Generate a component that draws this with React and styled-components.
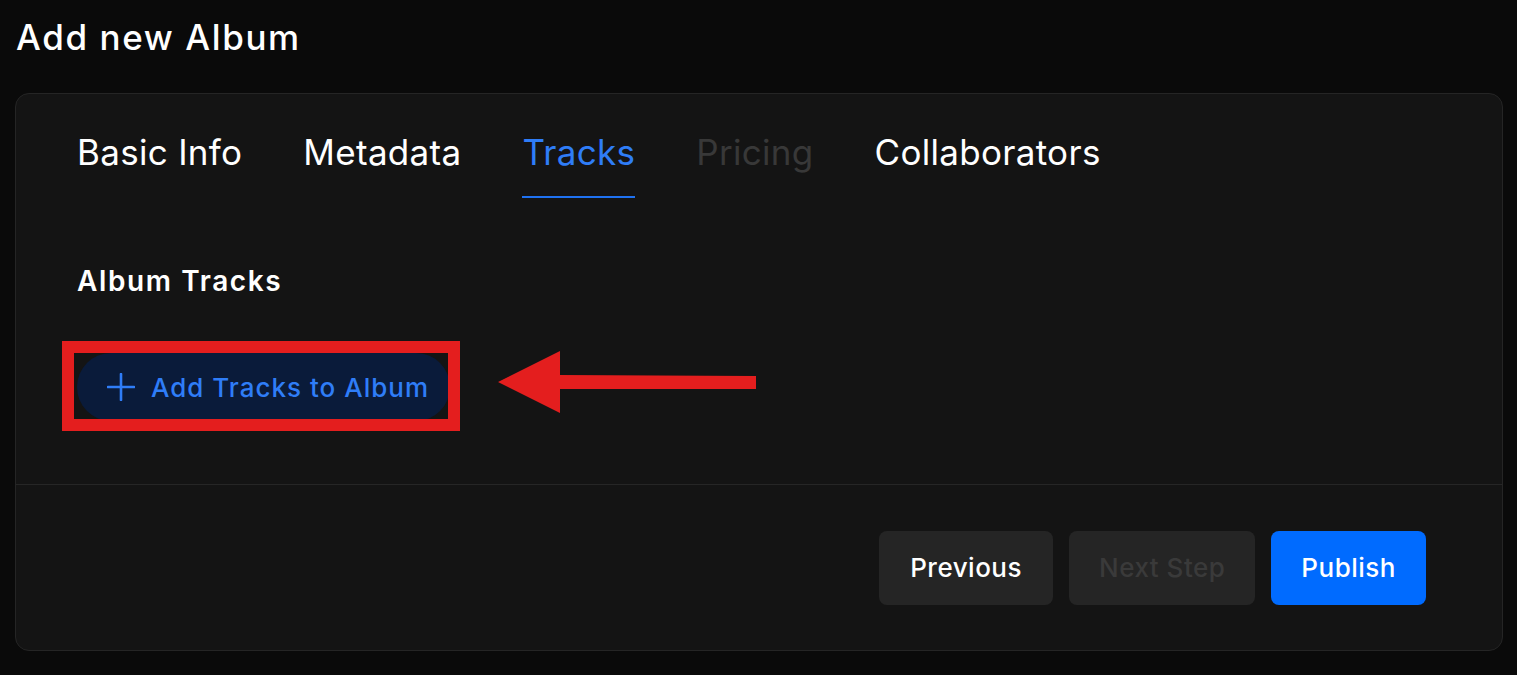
import React, { useState } from "react";
import styled, { createGlobalStyle } from "styled-components";

const GlobalStyle = createGlobalStyle`
  * { box-sizing: border-box; }
  body {
    margin: 0;
    background: #0a0a0a;
    font-family: Inter, "Noto Sans", sans-serif;
    color: #fff;
  }
`;

const tabs = ["Basic Info", "Metadata", "Tracks", "Pricing", "Collaborators"];
const disabledTabs = ["Pricing"];

const Page = styled.div`
  width: 1517px;
  height: 675px;
  padding: 15px 14px 0 15px;
`;

const Title = styled.h1`
  margin: 0 0 0 1px;
  height: 44px;
  line-height: 44px;
  font-size: 35px;
  font-weight: 500;
  letter-spacing: 1.6px;
`;

const Card = styled.div`
  margin-top: 34px;
  height: 558px;
  background: #141414;
  border: 1px solid #252525;
  border-radius: 14px;
  display: flex;
  flex-direction: column;
`;

const TabBar = styled.div`
  display: flex;
  gap: 61px;
  padding: 38px 0 0 61px;
`;

const Tab = styled.button`
  background: none;
  border: none;
  padding: 0 0 24px;
  font-family: inherit;
  font-size: 35px;
  font-weight: 400;
  letter-spacing: 0.3px;
  line-height: 40px;
  color: ${(p) => (p.$active ? "#2f7df7" : p.$disabled ? "#383838" : "#fff")};
  border-bottom: 2px solid ${(p) => (p.$active ? "#1f72f2" : "transparent")};
  cursor: ${(p) => (p.$disabled ? "default" : "pointer")};
`;

const Body = styled.div`
  padding: 67px 0 0 61px;
  height: 287px;
  border-bottom: 1px solid #262626;
`;

const SectionTitle = styled.h2`
  margin: 0;
  font-size: 28px;
  font-weight: 600;
  letter-spacing: 1.6px;
  line-height: 32px;
`;

const Highlight = styled.div`
  position: relative;
  display: inline-block;
  margin-top: 56px;
`;

const AddButton = styled.button`
  display: flex;
  align-items: center;
  gap: 16px;
  height: 68px;
  width: 373px;
  padding: 0 0 0 30px;
  border: none;
  border-radius: 34px;
  background: #0a1b3a;
  color: #2f7df7;
  font-family: inherit;
  font-size: 26px;
  font-weight: 500;
  letter-spacing: 1px;
  white-space: nowrap;
  cursor: pointer;
`;

const RedBox = styled.div`
  position: absolute;
  left: -15px;
  top: -12px;
  width: 398px;
  height: 90px;
  border: 12px solid #e41e1e;
  pointer-events: none;
`;

const Arrow = styled.svg`
  position: absolute;
  left: 420px;
  top: -3px;
`;

const Footer = styled.div`
  flex: 1;
  display: flex;
  justify-content: flex-end;
  align-items: center;
  gap: 16px;
  padding-right: 76px;
`;

const FooterButton = styled.button`
  height: 74px;
  padding: 0 ${(p) => p.$px || 30}px;
  border: none;
  border-radius: 8px;
  font-family: inherit;
  font-size: 26px;
  font-weight: 500;
  letter-spacing: 0.5px;
  background: ${(p) => (p.$primary ? "#006bff" : "#252525")};
  color: ${(p) => (p.$disabled ? "#3a3a3a" : "#fff")};
  cursor: ${(p) => (p.$disabled ? "default" : "pointer")};
`;

const PlusIcon = () => (
  <svg width="28" height="28" viewBox="0 0 28 28" fill="none">
    <path d="M14 1v26M1 14h26" stroke="#2f7df7" strokeWidth="2.6" strokeLinecap="round" />
  </svg>
);

export default function App() {
  const [active, setActive] = useState("Tracks");
  return (
    <>
      <GlobalStyle />
      <Page>
        <Title>Add new Album</Title>
        <Card>
          <TabBar>
            {tabs.map((t) => (
              <Tab
                key={t}
                $active={t === active}
                $disabled={disabledTabs.includes(t)}
                onClick={() => !disabledTabs.includes(t) && setActive(t)}
              >
                {t}
              </Tab>
            ))}
          </TabBar>
          <Body>
            <SectionTitle>Album Tracks</SectionTitle>
            <Highlight>
              <AddButton>
                <PlusIcon />
                Add Tracks to Album
              </AddButton>
              <RedBox />
              <Arrow width="262" height="66" viewBox="0 0 262 66">
                <path d="M1 32 L63 1 L63 25 L259 26 L259 39 L63 39 L63 63 Z" fill="#e41e1e" />
              </Arrow>
            </Highlight>
          </Body>
          <Footer>
            <FooterButton $px={31}>Previous</FooterButton>
            <FooterButton $disabled $px={30}>Next Step</FooterButton>
            <FooterButton $primary $px={30}>Publish</FooterButton>
          </Footer>
        </Card>
      </Page>
    </>
  );
}
